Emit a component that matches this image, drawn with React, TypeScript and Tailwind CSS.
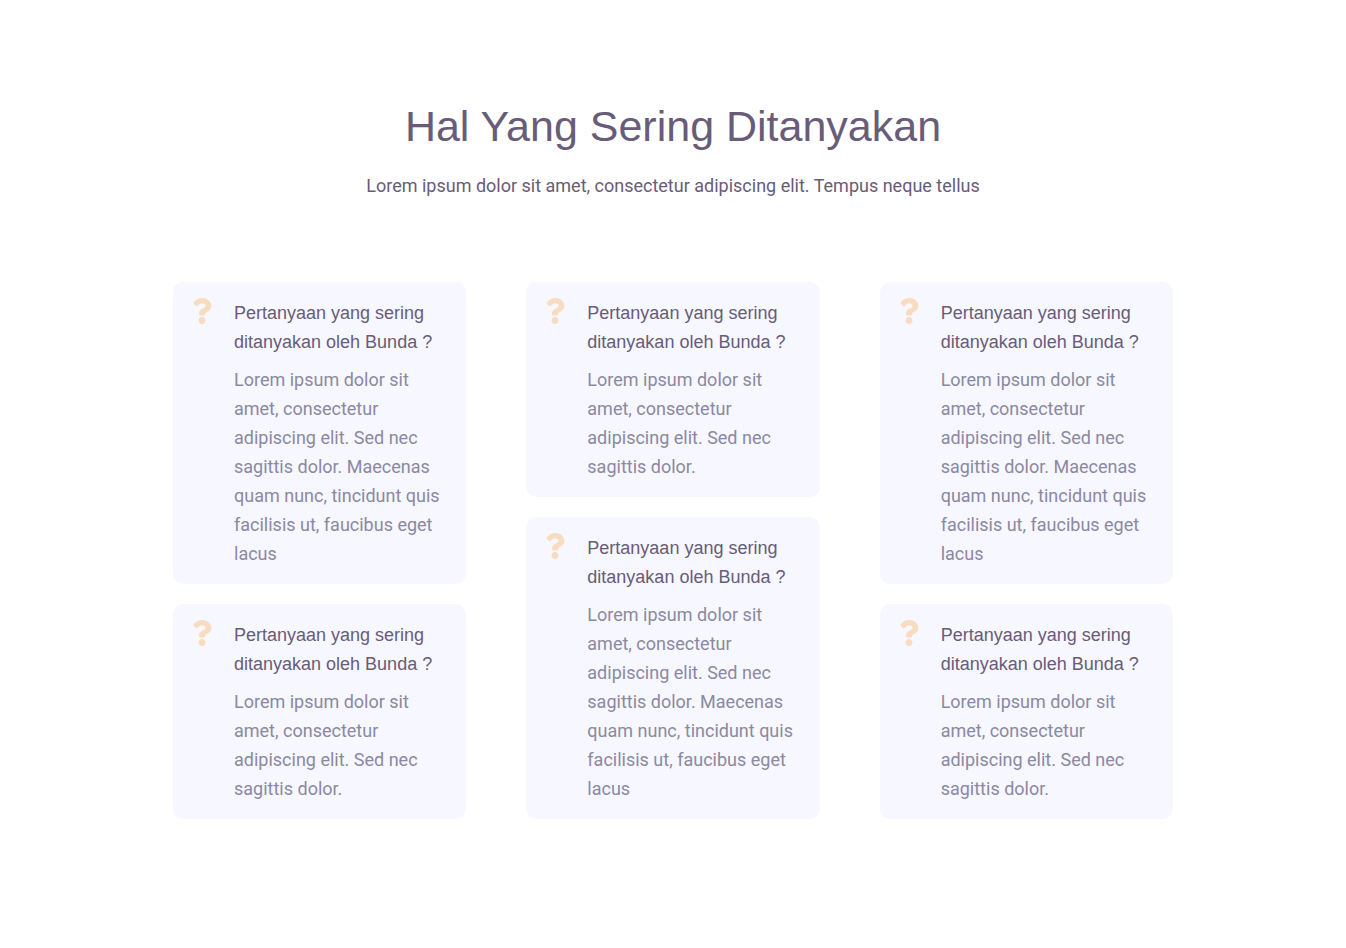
import { FaQuestion } from "react-icons/fa";

const SHORT = "Lorem ipsum dolor sit amet, consectetur adipiscing elit. Sed nec sagittis dolor.";
const LONG = `${SHORT} Maecenas quam nunc, tincidunt quis facilisis ut, faucibus eget lacus`;
const QUESTION = "Pertanyaan yang sering ditanyakan oleh Bunda ?";

const columns: string[][] = [
  [LONG, SHORT],
  [SHORT, LONG],
  [LONG, SHORT],
];

function FaqCard({ question, answer }: { question: string; answer: string }) {
  return (
    <article className="flex items-start gap-[22px] rounded-[10px] bg-[#f7f7ff] py-4 pr-5 pl-[19px]">
      <FaQuestion aria-hidden="true" className="h-[26px] w-5 shrink-0 text-[#f7dcbf]" />
      <div className="min-w-0 flex-1 pt-px text-lg leading-[29px]">
        <h3 className="font-['Liberation_Sans',Arial,sans-serif] text-[#685c79]">{question}</h3>
        <p className="mt-2 font-[Roboto,sans-serif] text-[#8b89a1]">{answer}</p>
      </div>
    </article>
  );
}

export default function App() {
  return (
    <main className="min-h-screen bg-white px-5 py-24">
      <section className="mx-auto max-w-[1000px]">
        <header className="text-center text-[#685c79]">
          <h2 className="font-['Liberation_Sans',Arial,sans-serif] text-[43px] leading-[60px]">
            Hal Yang Sering Ditanyakan
          </h2>
          <p className="mt-[15px] font-[Roboto,sans-serif] text-lg leading-[29px]">
            Lorem ipsum dolor sit amet, consectetur adipiscing elit. Tempus neque tellus
          </p>
        </header>
        <div className="mt-[82px] grid grid-cols-1 items-start gap-[60px] md:grid-cols-3">
          {columns.map((answers, column) => (
            <div key={column} className="flex flex-col gap-5">
              {answers.map((answer, row) => (
                <FaqCard key={row} question={QUESTION} answer={answer} />
              ))}
            </div>
          ))}
        </div>
      </section>
    </main>
  );
}
